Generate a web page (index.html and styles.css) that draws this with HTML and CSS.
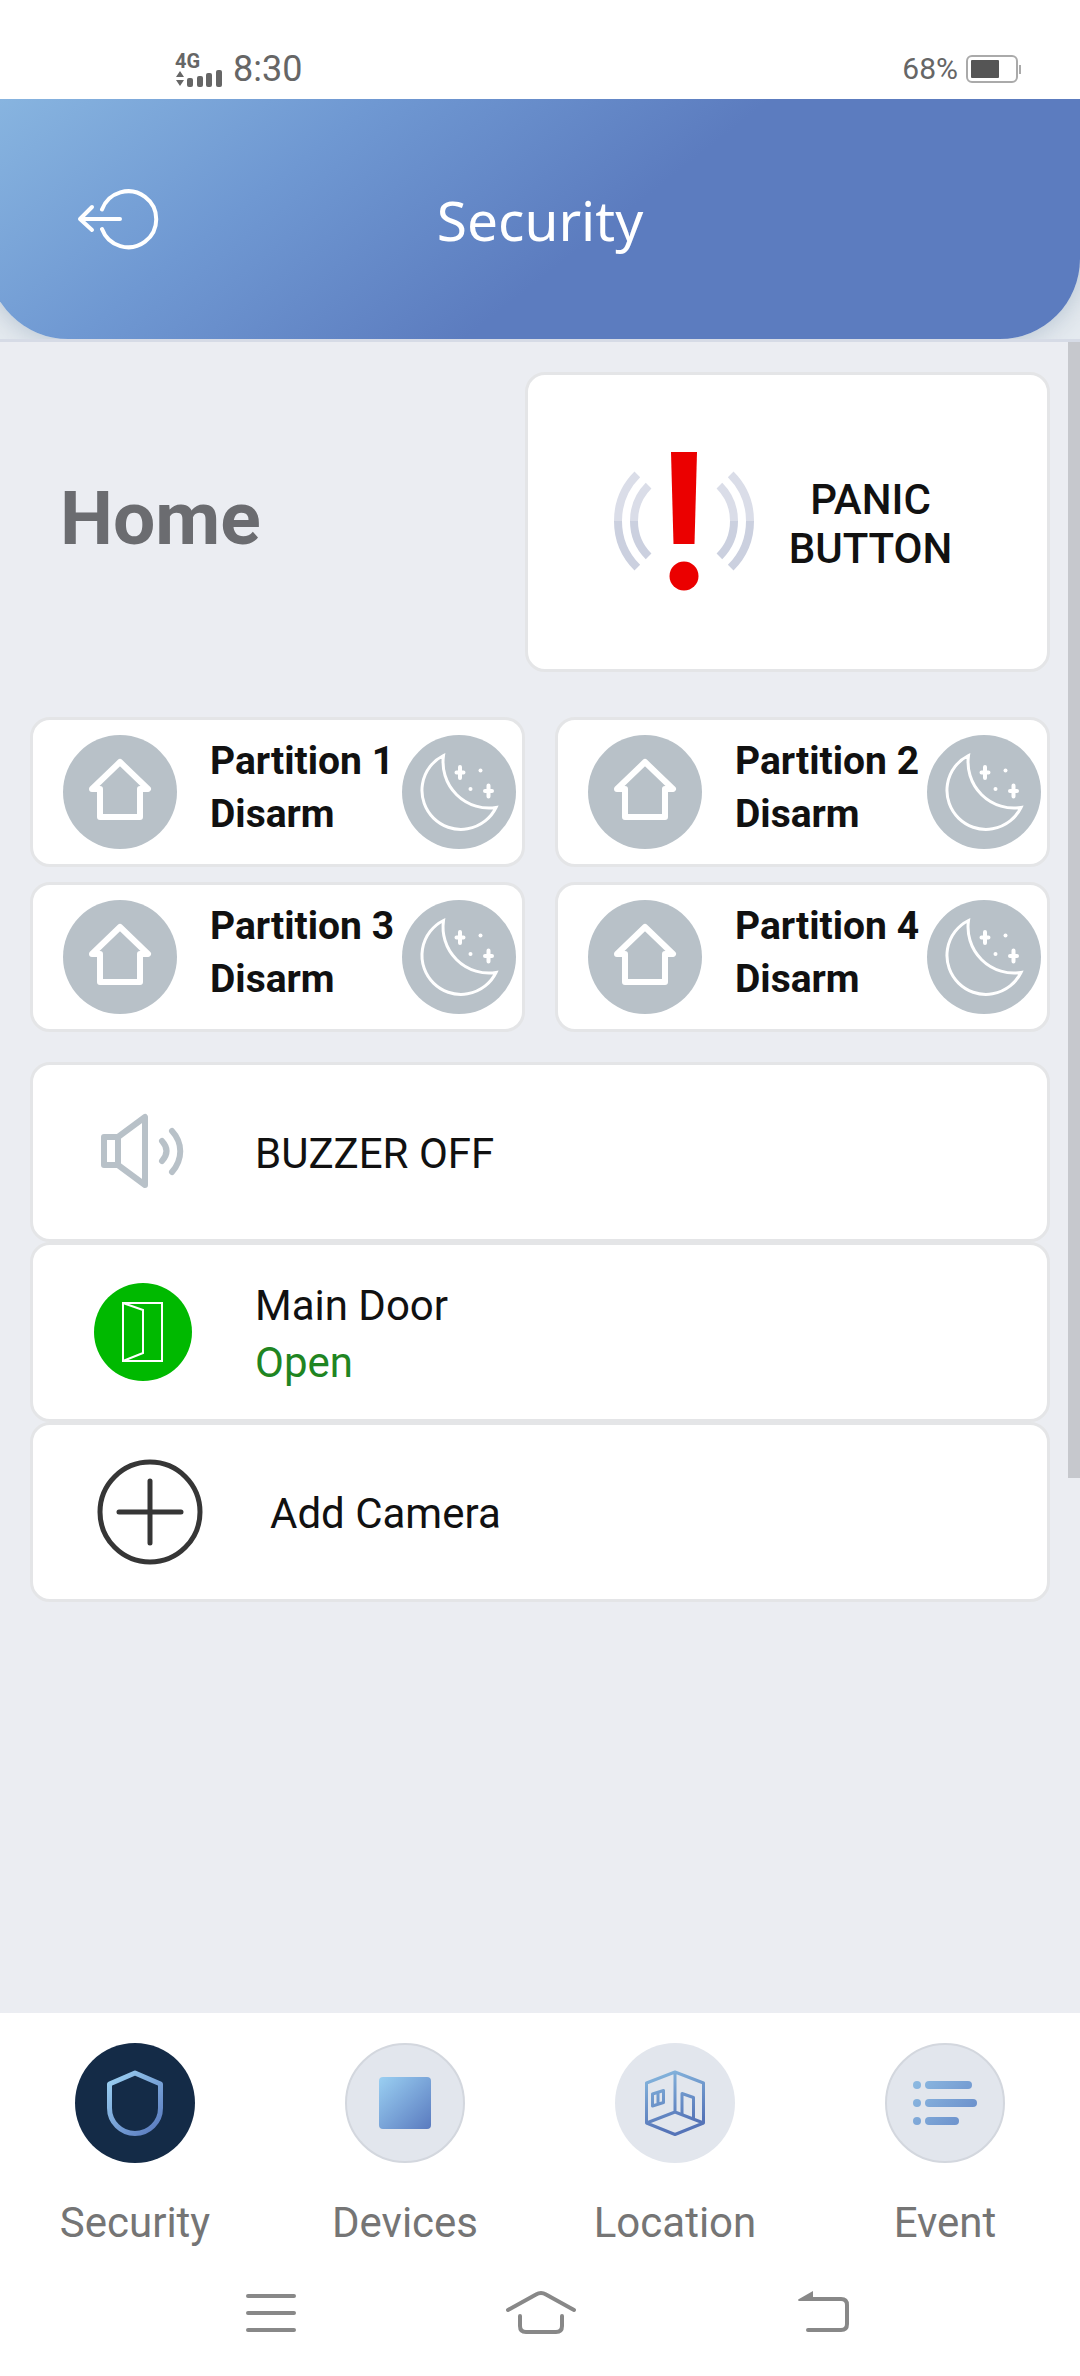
FILE: index.html
```
<!DOCTYPE html>
<html lang="en">
  <head>
    <meta charset="utf-8">
    <meta name="viewport" content="width=device-width, initial-scale=1">
    <title>Security</title>
    <link rel="stylesheet" href="styles.css">
  </head>
  <body>
    <!-- shared icons and gradients -->
    <svg class="defs" width="0" height="0" aria-hidden="true">
      <defs>
        <linearGradient id="blue" gradientUnits="userSpaceOnUse" x1="32" y1="32" x2="88" y2="88">
          <stop offset="0" stop-color="#9dd3f4"/>
          <stop offset="1" stop-color="#5777bd"/>
        </linearGradient>
        <linearGradient id="room" gradientUnits="userSpaceOnUse" x1="44" y1="30" x2="62" y2="84">
          <stop offset="0" stop-color="#84b4dc"/>
          <stop offset="1" stop-color="#5574b8"/>
        </linearGradient>
        <linearGradient id="list" gradientUnits="userSpaceOnUse" x1="26" y1="38" x2="80" y2="84">
          <stop offset="0" stop-color="#8ebbe2"/>
          <stop offset="1" stop-color="#6a8fcb"/>
        </linearGradient>
        <symbol id="icon-house" viewBox="0 0 114 114">
          <path d="M57 27 L85 54 H77 V82 H37 V54 H29 Z" fill="none" stroke="#fff" stroke-width="6" stroke-linejoin="round"/>
        </symbol>
        <symbol id="icon-moon" viewBox="0 0 114 114">
          <g fill="none" stroke="#fff" stroke-width="3">
            <path d="M41.5 20.5 A39 39 0 1 0 94 72.5 A46 46 0 0 1 41.5 20.5 Z"/>
            <path d="M58 32 V43 M54.5 37.5 H61.5 M86.5 50.5 V61.5 M83 56 H90" stroke-width="4" stroke-linecap="round"/>
          </g>
          <circle cx="78.5" cy="35.5" r="2" fill="#fff"/>
          <circle cx="68.5" cy="54" r="2" fill="#fff"/>
        </symbol>
      </defs>
    </svg>

    <div class="status-bar">
      <div class="status-left">
        <div class="signal">
          <span class="signal-type">4G</span>
          <svg viewBox="0 0 48 17" width="48" height="17" aria-hidden="true">
            <path d="M5 1 L9 7 H1 Z M1 10 H9 L5 16 Z" fill="#666"/>
            <g fill="#666">
              <rect x="12" y="8" width="6" height="9" rx="2"/>
              <rect x="22" y="6" width="6" height="11" rx="2"/>
              <rect x="31" y="3" width="6" height="14" rx="2"/>
              <rect x="41" y="0" width="6" height="17" rx="2"/>
            </g>
          </svg>
        </div>
        <span class="clock">8:30</span>
      </div>
      <div class="status-right">
        <span class="battery-level">68%</span>
        <svg viewBox="0 0 56 28" width="56" height="28" aria-hidden="true">
          <rect x="1" y="1" width="50" height="26" rx="5" fill="none" stroke="#aaa" stroke-width="2"/>
          <rect x="5" y="5" width="28" height="18" rx="1" fill="#555"/>
          <rect x="53" y="10" width="2" height="9" fill="#aaa"/>
        </svg>
      </div>
    </div>

    <div class="header-wrap">
      <header class="header">
        <button class="back" type="button" aria-label="Log out">
          <svg viewBox="0 0 84 64" width="84" height="64">
            <g fill="none" stroke="#fff" stroke-width="4" stroke-linecap="round" stroke-linejoin="round">
              <path d="M25 22.5 A28 28 0 1 1 25 42"/>
              <path d="M43 32 H4 M15 20 L3 32 L15 43"/>
            </g>
          </svg>
        </button>
        <h1>Security</h1>
      </header>
    </div>

    <main class="content">
      <div class="scrollbar"></div>

      <section class="top">
        <h2>Home</h2>
        <button class="card panic" type="button">
          <svg viewBox="0 0 142 142" width="142" height="142" aria-hidden="true">
            <g fill="none" stroke-width="8">
              <path stroke="#dadde8" d="M5 70 A66 66 0 0 1 24.3 23.3 M21 70 A50 50 0 0 1 35.6 34.6 M117.7 23.3 A66 66 0 0 1 137 70 M106.4 34.6 A50 50 0 0 1 121 70"/>
              <path stroke="#cbd0df" d="M5 70 A66 66 0 0 0 24.3 116.7 M21 70 A50 50 0 0 0 35.6 105.4 M117.7 116.7 A66 66 0 0 0 137 70 M106.4 105.4 A50 50 0 0 0 121 70"/>
            </g>
            <path d="M58 1 H84 L81.5 93 H60.5 Z" fill="#eb0000"/>
            <circle cx="71" cy="125" r="14.5" fill="#eb0000"/>
          </svg>
          <span>PANIC<br>BUTTON</span>
        </button>
      </section>

      <section class="partitions">
        <div class="card partition">
          <button class="round" type="button" aria-label="Arm partition 1"><svg><use href="#icon-house"/></svg></button>
          <div class="partition-text">Partition 1<br>Disarm</div>
          <button class="round" type="button" aria-label="Night arm partition 1"><svg><use href="#icon-moon"/></svg></button>
        </div>
        <div class="card partition">
          <button class="round" type="button" aria-label="Arm partition 2"><svg><use href="#icon-house"/></svg></button>
          <div class="partition-text">Partition 2<br>Disarm</div>
          <button class="round" type="button" aria-label="Night arm partition 2"><svg><use href="#icon-moon"/></svg></button>
        </div>
        <div class="card partition">
          <button class="round" type="button" aria-label="Arm partition 3"><svg><use href="#icon-house"/></svg></button>
          <div class="partition-text">Partition 3<br>Disarm</div>
          <button class="round" type="button" aria-label="Night arm partition 3"><svg><use href="#icon-moon"/></svg></button>
        </div>
        <div class="card partition">
          <button class="round" type="button" aria-label="Arm partition 4"><svg><use href="#icon-house"/></svg></button>
          <div class="partition-text">Partition 4<br>Disarm</div>
          <button class="round" type="button" aria-label="Night arm partition 4"><svg><use href="#icon-moon"/></svg></button>
        </div>
      </section>

      <section class="rows">
        <button class="card row" type="button">
          <svg viewBox="0 0 98 98" width="98" height="98" aria-hidden="true">
            <g fill="none" stroke="#b8c1c8" stroke-width="6" stroke-linecap="round" stroke-linejoin="round">
              <path d="M24 34 H10 V62 H24 Z M24 34 L51 14 V82 L24 62"/>
              <path d="M68 38 Q77 48 68 58 M78 28 C89 40 89 56 78 69"/>
            </g>
          </svg>
          <span class="row-text">BUZZER OFF</span>
        </button>
        <button class="card row" type="button">
          <svg viewBox="0 0 98 98" width="98" height="98" aria-hidden="true">
            <circle cx="49" cy="49" r="49" fill="#00b900"/>
            <path d="M29 20 H68 V78 H29 Z L49 27 V70 L29 78" fill="none" stroke="#fff" stroke-width="2"/>
          </svg>
          <span class="row-text">Main Door<br><span class="open">Open</span></span>
        </button>
        <button class="card row row-add" type="button">
          <svg viewBox="0 0 106 106" width="106" height="106" aria-hidden="true">
            <circle cx="53" cy="53" r="50" fill="none" stroke="#363636" stroke-width="5"/>
            <path d="M53 22 V84 M22 53 H84" stroke="#363636" stroke-width="5" stroke-linecap="round"/>
          </svg>
          <span class="row-text">Add Camera</span>
        </button>
      </section>
    </main>

    <nav class="tabs">
      <a class="tab" href="#security">
        <svg viewBox="0 0 120 120" width="120" height="120" aria-hidden="true">
          <circle cx="60" cy="60" r="60" fill="#142b47"/>
          <path d="M60 30 L34.5 41 V65 A25.5 25.5 0 0 0 85.5 65 V41 Z" fill="none" stroke="url(#blue)" stroke-width="5" stroke-linejoin="round"/>
        </svg>
        <span>Security</span>
      </a>
      <a class="tab" href="#devices">
        <svg viewBox="0 0 120 120" width="120" height="120" aria-hidden="true">
          <circle cx="60" cy="60" r="59" fill="#e2e6ed" stroke="#d3d7de" stroke-width="2"/>
          <rect x="34" y="34" width="52" height="52" rx="4" fill="url(#blue)"/>
        </svg>
        <span>Devices</span>
      </a>
      <a class="tab" href="#location">
        <svg viewBox="0 0 120 120" width="120" height="120" aria-hidden="true">
          <circle cx="60" cy="60" r="60" fill="#e2e6ed"/>
          <g fill="none" stroke="url(#room)" stroke-width="3" stroke-linejoin="round">
            <path d="M60 29 L31.5 40 V80 L60 91.5 L88.5 80 V40 Z M60 29 V69 M31.5 80 L60 69 L88.5 80"/>
            <path d="M37.5 51 L48.5 47.5 V59.5 L37.5 63 Z M43 49 V61.5 M67 71 V50.5 L78.5 54.5 V75"/>
          </g>
        </svg>
        <span>Location</span>
      </a>
      <a class="tab" href="#event">
        <svg viewBox="0 0 120 120" width="120" height="120" aria-hidden="true">
          <circle cx="60" cy="60" r="59" fill="#e2e6ed" stroke="#d3d7de" stroke-width="2"/>
          <g fill="url(#list)">
            <circle cx="32" cy="42" r="4"/>
            <circle cx="32" cy="60" r="4"/>
            <circle cx="32" cy="78" r="4"/>
            <rect x="40" y="38" width="47" height="8" rx="4"/>
            <rect x="40" y="56" width="52" height="8" rx="4"/>
            <rect x="40" y="74" width="34" height="8" rx="4"/>
          </g>
        </svg>
        <span>Event</span>
      </a>
    </nav>

    <div class="system-bar">
      <button type="button" aria-label="Recent apps">
        <svg viewBox="0 0 100 60" width="100" height="60">
          <path d="M28 13 H74 M28 30 H74 M28 47 H74" stroke="#888" stroke-width="4" stroke-linecap="round"/>
        </svg>
      </button>
      <button type="button" aria-label="Home screen">
        <svg viewBox="0 0 100 60" width="100" height="60">
          <path d="M18 27 L46 11.5 Q51 8.5 56 11.5 L84 27 M30 33 V43 Q30 49 36 49 H66 Q72 49 72 43 V33" fill="none" stroke="#888" stroke-width="4" stroke-linecap="round"/>
        </svg>
      </button>
      <button type="button" aria-label="Go back">
        <svg viewBox="0 0 100 60" width="100" height="60">
          <path d="M46 16 H81 Q87 16 87 22 V41 Q87 47 81 47 H48" fill="none" stroke="#888" stroke-width="4" stroke-linecap="round"/>
          <path d="M53 8 V18 H39 Q37 17 39 16 Z" fill="#888"/>
        </svg>
      </button>
    </div>
  </body>
</html>
```
FILE: styles.css
```
* {
  box-sizing: border-box;
}

body {
  display: flex;
  flex-direction: column;
  min-height: 100vh;
  margin: 0;
  background: #fff;
  color: #111;
  font-family: Roboto, Arial, sans-serif;
  font-size: 42px;
  overflow-x: hidden;
}

h1,
h2 {
  margin: 0;
}

button {
  padding: 0;
  border: none;
  background: none;
  color: inherit;
  font: inherit;
  cursor: pointer;
}

svg {
  display: block;
  flex: none;
}

.defs {
  position: absolute;
}

/* status bar */
.status-bar {
  display: flex;
  justify-content: space-between;
  align-items: flex-end;
  height: 99px;
  padding: 0 58px 11px 175px;
  color: #666;
}

.status-left,
.status-right {
  display: flex;
  align-items: center;
  gap: 8px;
}

.status-right {
  padding-bottom: 5px;
}

.signal {
  width: 50px;
}

.signal-type {
  display: block;
  font-size: 20px;
  font-weight: bold;
  line-height: 18px;
}

.clock {
  font-size: 36px;
  line-height: 38px;
}

.battery-level {
  font-size: 30px;
  line-height: 28px;
}

/* header */
.header-wrap {
  overflow: hidden;
  border-bottom: 3px solid #d6dbe6;
  background: #e6ebf0;
}

.header {
  display: grid;
  grid-template-columns: 1fr auto 1fr;
  align-items: center;
  height: 240px;
  margin-left: -12px;
  padding-left: 12px;
  border-radius: 0 0 80px 80px;
  background: linear-gradient(142deg, #88b5e0, #6f98d2 28%, #5c7cbf 56%);
  box-shadow: 0 0 30px rgba(90, 120, 150, 0.4);
  color: #fff;
}

.back {
  justify-self: start;
  margin-left: 77px;
}

.header h1 {
  font-family: "Noto Sans", "Open Sans", sans-serif;
  font-size: 55px;
  font-weight: normal;
}

/* content */
.content {
  position: relative;
  flex: 1;
  padding: 30px;
  background: #ebedf2;
}

.scrollbar {
  position: absolute;
  top: 0;
  right: 0;
  width: 12px;
  height: 68%;
  background: #c6c8cd;
}

.card {
  border: 3px solid #e4e5e7;
  border-radius: 20px;
  background: #fff;
}

.top {
  display: flex;
  align-items: center;
  margin-bottom: 45px;
}

.top h2 {
  flex: 1;
  padding-left: 30px;
  padding-bottom: 8px;
  color: #6b6c70;
  font-size: 75px;
}

.panic {
  display: flex;
  align-items: center;
  justify-content: center;
  gap: 34px;
  width: 525px;
  height: 300px;
  padding-right: 10px;
  font-weight: 500;
  line-height: 49px;
  text-align: center;
}

.panic span {
  padding-top: 4px;
}

.partitions {
  display: grid;
  grid-template-columns: 1fr 1fr;
  gap: 15px 30px;
  margin-bottom: 30px;
}

.partition {
  display: flex;
  align-items: center;
  height: 150px;
  padding: 0 6px 0 30px;
}

.partition-text {
  flex: 1;
  padding: 0 0 8px 33px;
  font-size: 39px;
  font-weight: bold;
  line-height: 53px;
  white-space: nowrap;
}

.round {
  flex: none;
  border-radius: 50%;
  background: #b8c1c8;
}

.round svg {
  width: 114px;
  height: 114px;
}

.rows {
  display: flex;
  flex-direction: column;
}

.row {
  display: flex;
  align-items: center;
  gap: 63px;
  height: 180px;
  padding-left: 61px;
  line-height: 57px;
  text-align: left;
}

.row-text {
  padding-top: 3px;
}

.row-add {
  gap: 67px;
  padding-left: 64px;
}

.open {
  color: #1f8522;
}

/* bottom tabs */
.tabs {
  display: grid;
  grid-template-columns: repeat(4, 1fr);
  padding-top: 30px;
}

.tab {
  display: flex;
  flex-direction: column;
  align-items: center;
  gap: 32px;
  color: #757575;
  line-height: 56px;
  text-decoration: none;
}

.system-bar {
  display: grid;
  grid-template-columns: repeat(3, 1fr);
  justify-items: center;
  padding: 32px 135px 33px;
}
```
